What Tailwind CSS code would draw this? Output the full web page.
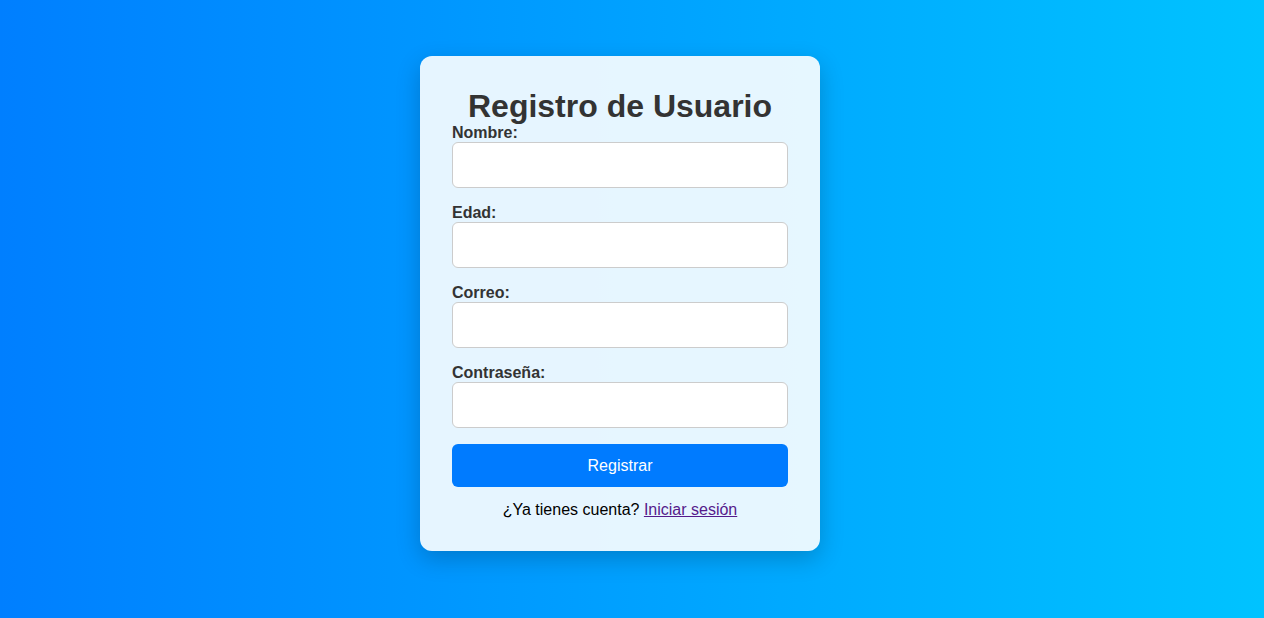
<!DOCTYPE html>
<html lang="es">
<head>
<meta charset="utf-8">
<meta name="viewport" content="width=device-width, initial-scale=1">
<title>Registro de Usuario</title>
<script src="https://cdn.jsdelivr.net/npm/@tailwindcss/browser@4"></script>
</head>
<body class="flex min-h-screen items-center justify-center bg-linear-[to_right,#007fff,#00c3ff] pr-6 pb-3 font-['Liberation_Sans',Arial,sans-serif] text-base text-black">
<main class="w-full max-w-[400px] rounded-xl bg-white/90 p-8 text-center shadow-[0_8px_24px_rgba(0,0,0,0.2)]">
<h1 class="text-[32px] leading-9 font-bold text-[#333]">Registro de Usuario</h1>
<form class="flex flex-col gap-4 text-left">
<div>
<label for="nombre" class="block leading-[18px] font-bold text-[#333]">Nombre:</label>
<input id="nombre" type="text" class="block h-[46px] w-full rounded-md border border-[#ccc] bg-white px-3">
</div>
<div>
<label for="edad" class="block leading-[18px] font-bold text-[#333]">Edad:</label>
<input id="edad" type="number" class="block h-[46px] w-full rounded-md border border-[#ccc] bg-white px-3">
</div>
<div>
<label for="correo" class="block leading-[18px] font-bold text-[#333]">Correo:</label>
<input id="correo" type="email" class="block h-[46px] w-full rounded-md border border-[#ccc] bg-white px-3">
</div>
<div>
<label for="contrasena" class="block leading-[18px] font-bold text-[#333]">Contraseña:</label>
<input id="contrasena" type="password" class="block h-[46px] w-full rounded-md border border-[#ccc] bg-white px-3">
</div>
<button type="submit" class="rounded-md bg-[#007bff] p-3 leading-[19px] text-white">Registrar</button>
</form>
<p class="mt-3.5 leading-[18px]">¿Ya tienes cuenta? <a href="#" class="text-[#551a8b] underline">Iniciar sesión</a></p>
</main>
</body>
</html>
